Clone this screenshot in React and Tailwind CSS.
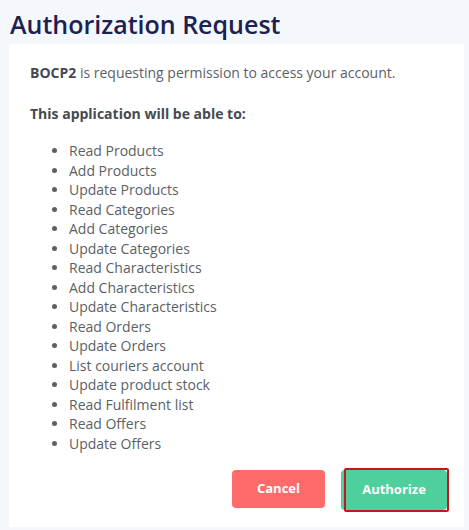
export default function App() {
  const scopes = [
    'Read Products',
    'Add Products',
    'Update Products',
    'Read Categories',
    'Add Categories',
    'Update Categories',
    'Read Characteristics',
    'Add Characteristics',
    'Update Characteristics',
    'Read Orders',
    'Update Orders',
    'List couriers account',
    'Update product stock',
    'Read Fulfilment list',
    'Read Offers',
    'Update Offers',
  ];

  return (
    <div className="w-[469px] h-[530px] bg-[#f4f7fb] font-['Open_Sans',sans-serif] overflow-hidden">
      <h1 className="pl-[10px] pt-[4px] h-[44px] text-[25px] leading-[40px] font-semibold text-[#1b2150]">
        Authorization Request
      </h1>
      <div className="ml-[9px] w-[455px] h-[483px] bg-white pl-[21px] pr-4 pt-[19px]">
        <p className="text-[14px] leading-5 text-[#5b5f66]">
          <span className="font-bold text-[#464a50]">BOCP2</span> is requesting permission to access your account.
        </p>
        <p className="mt-[21px] text-[14px] leading-5 font-bold text-[#464a50]">
          This application will be able to:
        </p>
        <ul className="mt-[17px] pl-[39px] list-disc text-[14px] leading-[19.5px] text-[#5b5f66]">
          {scopes.map((s) => (
            <li key={s}>{s}</li>
          ))}
        </ul>
        <div className="mt-[17px] flex justify-end gap-[16px] pr-[1px]">
          <button className="w-[93px] h-[38px] rounded-[4px] bg-[#ff6b6b] text-white text-[13px] font-bold">
            Cancel
          </button>
          <div className="relative">
            <button className="w-[106px] h-[40px] rounded-[4px] bg-[#4fcf9e] text-white text-[13px] font-bold">
              Authorize
            </button>
            <div className="absolute left-[3px] -top-[2px] w-[105px] h-[44px] border-2 border-[#c8141c] rounded-[2px]" />
          </div>
        </div>
      </div>
    </div>
  );
}
